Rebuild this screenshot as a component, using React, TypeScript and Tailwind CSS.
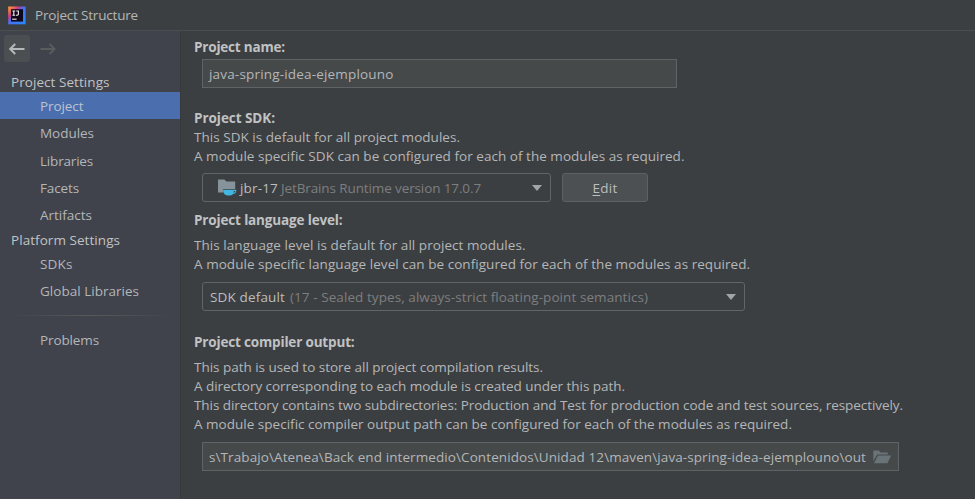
import type { ReactNode } from 'react';

function NavItem({ label, className }: { label: string; className: string }) {
  return <div className={`flex shrink-0 items-center pl-[40px] ${className}`}>{label}</div>;
}

function Heading({ children, className }: { children: ReactNode; className: string }) {
  return <h2 className={`h-[19px] leading-[19px] font-bold text-[#c0c2c4] ${className}`}>{children}</h2>;
}

function Line({ children, className }: { children: ReactNode; className: string }) {
  return <p className={`h-[19px] leading-[19px] ${className}`}>{children}</p>;
}

function Caret() {
  return (
    <svg width="12" height="8" viewBox="0 0 12 8" className="block shrink-0">
      <path d="M1 1H11L6 7Z" fill="#a2a4a6" />
    </svg>
  );
}

function Logo() {
  return (
    <svg width="18" height="19" viewBox="0 0 18 19" className="shrink-0">
      <defs>
        <linearGradient id="frame" x1="0" y1="0" x2="1" y2="1">
          <stop offset="0" stopColor="#f8a33c" />
          <stop offset="0.16" stopColor="#f5704f" />
          <stop offset="0.32" stopColor="#c93a8e" />
          <stop offset="0.46" stopColor="#4b6ff0" />
          <stop offset="1" stopColor="#1f8dff" />
        </linearGradient>
      </defs>
      <rect x="0.2" y="0.5" width="17.4" height="17.8" fill="url(#frame)" />
      <rect x="3" y="3.2" width="12" height="12.4" fill="#100818" />
      <path d="M4.4 5H7.2M5.8 5V9.2M4.4 9.2H7.2M8.2 5H10.4V8.2Q10.4 9.3 8 9.2" fill="none" stroke="#f1edf3" strokeWidth="1.1" />
      <path d="M4.2 13.2H8.6" stroke="#f1edf3" strokeWidth="1.1" />
    </svg>
  );
}

export default function App() {
  return (
    <div className="flex h-[499px] w-[975px] flex-col overflow-hidden bg-[#3c3f41] font-['Open_Sans','Noto_Sans',sans-serif] text-[13.5px] whitespace-nowrap text-[#b4b6b8]">
      <header className="flex h-[31px] shrink-0 items-center border-b border-[#4b4d4f] pl-[8px]">
        <Logo />
        <h1 className="ml-[9px] tracking-[-0.188px]">Project Structure</h1>
      </header>

      <div className="flex min-h-0 flex-1">
        <aside className="flex w-[181px] shrink-0 flex-col border-r border-[#38393b] bg-[#40434c]">
          <div className="mt-[4px] flex h-[27px] shrink-0 pl-[4px]">
            <button className="flex h-[27px] w-[26px] items-center justify-center rounded-[3px] bg-[#4c4f52]">
              <svg width="18" height="14" viewBox="0 0 18 14" fill="none" stroke="#b6b8ba" strokeWidth="2">
                <path d="M16.5 7H2.5M7.2 2L2.2 7L7.2 12" />
              </svg>
            </button>
            <button className="ml-[5px] flex h-[27px] w-[26px] items-center justify-center">
              <svg width="18" height="14" viewBox="0 0 18 14" fill="none" stroke="#5b5c5e" strokeWidth="1.8">
                <path d="M1.5 7H15.5M10.6 2L15.6 7L10.6 12" />
              </svg>
            </button>
          </div>
          <div className="mt-[10px] flex h-[20px] shrink-0 items-center pl-[11px] tracking-[0.057px] text-[#c0c2c4]">Project Settings</div>
          <NavItem label="Project" className="h-[27px] bg-[#4b6eaf] pt-[2px] tracking-[-0.075px] text-[#bcc3cf]" />
          <NavItem label="Modules" className="h-[28px] tracking-[-0.032px]" />
          <NavItem label="Libraries" className="h-[27px] pt-[2px] tracking-[-0.186px]" />
          <NavItem label="Facets" className="h-[28px] tracking-[-0.127px]" />
          <NavItem label="Artifacts" className="h-[26px] tracking-[-0.003px]" />
          <div className="mt-[1px] flex h-[22px] shrink-0 items-center pl-[11px] tracking-[0.054px] text-[#c0c2c4]">Platform Settings</div>
          <NavItem label="SDKs" className="h-[26px] tracking-[0.151px]" />
          <NavItem label="Global Libraries" className="h-[28px] tracking-[0.019px]" />
          <div className="mt-[10px] ml-[10px] h-px w-[162px] shrink-0 bg-linear-to-r from-transparent via-[#585a5b] to-transparent" />
          <NavItem label="Problems" className="mt-[11px] h-[27px] tracking-[-0.117px]" />
        </aside>

        <main className="flex min-w-0 flex-1 flex-col pl-[13px]">
          <Heading className="mt-[7px] tracking-[-0.191px]">Project name:</Heading>
          <div className="mt-[2px] ml-[8px] flex h-[29px] w-[475px] items-center border border-[#606365] bg-[#45494a] pt-[2px] pl-[6px]">
            <span className="tracking-[0.178px]">java-spring-idea-ejemplouno</span>
          </div>

          <Heading className="mt-[21px] tracking-[-0.051px]">Project SDK:</Heading>
          <Line className="tracking-[0.032px]">This SDK is default for all project modules.</Line>
          <Line className="tracking-[0.033px]">A module specific SDK can be configured for each of the modules as required.</Line>
          <div className="mt-[7px] ml-[8px] flex h-[29px]">
            <div className="flex w-[349px] items-center rounded-[3px] border border-[#626567] pr-[7px] pl-[15px]">
              <svg width="19" height="18" viewBox="0 0 19 18" className="mt-px shrink-0">
                <path d="M0 0.4H6.4L8.4 2.6H17.2V10H5V13.4H0Z" fill="#87939a" />
                <path d="M5 10.8H15.6H18.2V12.8Q18 14.8 15.2 15Q13.8 16.6 11.2 16.6H9.6Q5 15.8 5 10.8Z" fill="#40b6e0" />
                <path d="M15.8 12H17.1V12.8Q16.7 13.7 15.5 13.8Z" fill="#3c3f41" />
              </svg>
              <span className="ml-[3px] pt-[2px] tracking-[0.172px] text-[#bbbdbf]">jbr-17</span>
              <span className="ml-[3px] pt-[2px] tracking-[-0.114px] text-[#7c7e80]">JetBrains Runtime version 17.0.7</span>
              <span className="ml-auto"><Caret /></span>
            </div>
            <button className="ml-[11px] flex w-[86px] items-center justify-center rounded-[3px] border border-[#5e6163] bg-[#4c5053] pt-[2px] tracking-[0.255px] text-[#bbbdbf]">
              <span className="underline underline-offset-2">E</span>dit
            </button>
          </div>

          <Heading className="mt-[9px] tracking-[-0.152px]">Project language level:</Heading>
          <Line className="mt-[6px] tracking-[0.054px]">This language level is default for all project modules.</Line>
          <Line className="tracking-[0.047px]">A module specific language level can be configured for each of the modules as required.</Line>
          <div className="mt-[8px] ml-[8px] flex h-[29px] w-[543px] items-center rounded-[3px] border border-[#626567] pr-[7px] pl-[7px]">
            <span className="pt-[2px] tracking-[0.15px] text-[#bbbdbf]">SDK default</span>
            <span className="ml-[5px] pt-[2px] tracking-[0.072px] text-[#7c7e80]">(17 - Sealed types, always-strict floating-point semantics)</span>
            <span className="ml-auto"><Caret /></span>
          </div>

          <Heading className="mt-[22px] tracking-[-0.168px]">Project compiler output:</Heading>
          <Line className="mt-[6px] tracking-[-0.026px]">This path is used to store all project compilation results.</Line>
          <Line className="tracking-[-0.034px]">A directory corresponding to each module is created under this path.</Line>
          <Line className="tracking-[-0.073px]">This directory contains two subdirectories: Production and Test for production code and test sources, respectively.</Line>
          <Line className="tracking-[0.019px]">A module specific compiler output path can be configured for each of the modules as required.</Line>
          <div className="mt-[8px] ml-[8px] flex h-[29px] w-[697px] items-center border border-[#606365] bg-[#45494a] pl-[6px]">
            <span className="pt-[2px] tracking-[0.092px]">{'s\\Trabajo\\Atenea\\Back end intermedio\\Contenidos\\Unidad 12\\maven\\java-spring-idea-ejemplouno\\out'}</span>
            <svg width="19" height="14" viewBox="0 0 19 14" className="ml-[7px] shrink-0">
              <path d="M0.3 0.6H5.8L7.6 2.6H14.8V4.6H4.2L0.3 11.2Z" fill="#6a7377" />
              <path d="M5 5.6H18.2L14.4 13.2H1Z" fill="#6a7377" />
            </svg>
          </div>
        </main>
      </div>
    </div>
  );
}
